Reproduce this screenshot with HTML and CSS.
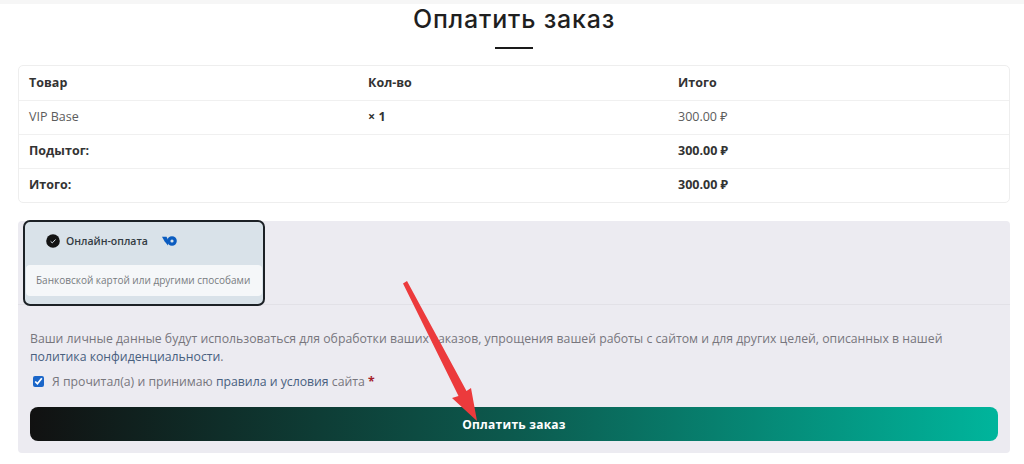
FILE: index.html
```html
<!DOCTYPE html>
<html lang="ru">
<head>
    <meta charset="UTF-8">
    <meta name="viewport" content="width=device-width, initial-scale=1.0">
    <title>Оплатить заказ</title>
    <link rel="stylesheet" href="styles.css">
</head>
<body>

    <div class="top-strip"></div>

    <main class="page">
        <h1 class="page-title">Оплатить заказ</h1>
        <div class="title-line"></div>

        <!-- Order table -->
        <div class="table-box">
            <table class="order-table">
                <thead>
                    <tr>
                        <th class="col-name">Товар</th>
                        <th class="col-qty">Кол-во</th>
                        <th>Итого</th>
                    </tr>
                </thead>
                <tbody>
                    <tr>
                        <td>VIP Base</td>
                        <td><strong>× 1</strong></td>
                        <td>300.00 ₽</td>
                    </tr>
                </tbody>
                <tfoot>
                    <tr>
                        <th colspan="2">Подытог:</th>
                        <td><strong>300.00 ₽</strong></td>
                    </tr>
                    <tr>
                        <th colspan="2">Итого:</th>
                        <td><strong>300.00 ₽</strong></td>
                    </tr>
                </tfoot>
            </table>
        </div>

        <!-- Payment block -->
        <section class="payment">
            <div class="methods">
                <div class="method">
                    <div class="method-head">
                        <span class="method-radio">
                            <svg viewBox="0 0 14 14" width="14" height="14">
                                <circle cx="7" cy="7" r="6.8" fill="#141414"/>
                                <path d="M4.6 7.3l1.7 1.6 3.2-3.4" fill="none" stroke="#d9e2e9" stroke-width="1"/>
                            </svg>
                        </span>
                        <span class="method-name">Онлайн-оплата</span>
                        <svg class="method-logo" viewBox="0 0 15 10" width="15" height="10">
                            <path d="M0 .8h4.500l1.500 3v5.700L2.500 5.200z" fill="#0b5cc0"/>
                            <circle cx="10" cy="5" r="3.200" fill="none" stroke="#0b5cc0" stroke-width="3.200"/>
                        </svg>
                    </div>
                    <div class="method-info">Банковской картой или другими способами</div>
                </div>
            </div>

            <div class="place-order">
                <p class="privacy">Ваши личные данные будут использоваться для обработки ваших заказов, упрощения вашей работы с сайтом и для других целей, описанных в нашей <a href="#">политика конфиденциальности</a>.</p>
                <label class="terms">
                    <input type="checkbox" checked>
                    <span>Я прочитал(а) и принимаю <a href="#">правила и условия</a> сайта <b class="required">*</b></span>
                </label>
                <button class="pay-button">Оплатить заказ</button>
            </div>
        </section>
    </main>

    <!-- Red arrow drawn over the screenshot -->
    <svg class="arrow" viewBox="0 0 1024 464" width="1024" height="464">
        <path d="M403 283.500L407 281 466.500 391 471 388 477 421 452 398 458.500 396z" fill="#ec3a3c"/>
    </svg>

</body>
</html>
```

FILE: styles.css
```css
/* Universal Styling */
body {
    margin: 0;
    font-family: "Open Sans", "Noto Sans", sans-serif;
    font-size: 12.5px;
    color: #5c5c5c;
    background-color: #ffffff;
    overflow: hidden;
}

.top-strip {
    height: 4px;
    background-color: #f6f6f6;
}

.page {
    padding: 0 14px 0 18px;
}

/* Title */
.page-title {
    margin: 0;
    height: 35px;
    line-height: 31px;
    font-family: Inter, "Noto Sans", sans-serif;
    font-size: 25px;
    font-weight: 500;
    letter-spacing: 0.8px;
    color: #1f1f1f;
    text-align: center;
}

.title-line {
    width: 38px;
    height: 2px;
    margin: 8px auto 16px;
    background-color: #1a1a1a;
}

/* Order table */
.table-box {
    height: 138px;
    box-sizing: border-box;
    border: 1px solid #eeeeee;
    border-radius: 5px;
}

.order-table {
    width: 100%;
    border-collapse: collapse;
    table-layout: fixed;
}

.order-table th,
.order-table td {
    height: 34px;
    box-sizing: border-box;
    padding: 0 10px 2px;
    text-align: left;
    border-top: 1px solid #f0f0f0;
}

.order-table thead th {
    border-top: none;
    padding-bottom: 0;
}

.order-table th,
.order-table strong {
    font-weight: 700;
    color: #333333;
}

.col-name {
    width: 339px;
}

.col-qty {
    width: 310px;
}

/* Payment block */
.payment {
    height: 232px;
    margin-top: 18px;
    background-color: #ecebf1;
    border-radius: 4px;
}

.methods {
    height: 83px;
    border-bottom: 1px solid #e2e1e7;
}

.method {
    width: 242px;
    height: 86px;
    box-sizing: border-box;
    margin-left: 5px;
    position: relative;
    top: -1px;
    padding: 0 1px;
    background-color: #d9e2e9;
    border: 2px solid #1c2126;
    border-radius: 7px;
}

.method-head {
    display: flex;
    align-items: center;
    height: 38px;
    padding: 0 0 5px 20px;
}

.method-radio {
    display: flex;
    margin-right: 6px;
}

.method-name {
    font-size: 10.5px;
    font-weight: 600;
    color: #333b42;
}

.method-logo {
    margin-left: 14px;
}

.method-info {
    height: 31px;
    line-height: 31px;
    padding-left: 10px;
    font-size: 10px;
    color: #777b80;
    background-color: #f5f7f9;
    border-radius: 4px;
}

.place-order {
    padding: 25px 12px 0;
}

.privacy {
    margin: 0;
    font-size: 12.25px;
    line-height: 18px;
    color: #77767d;
}

a {
    color: #48607f;
    text-decoration: none;
}

.terms {
    display: flex;
    align-items: center;
    margin-top: 6px;
    height: 18px;
    font-size: 12.25px;
    color: #77767d;
}

.terms input {
    width: 11px;
    height: 11px;
    margin: 0 8px 0 3px;
    accent-color: #1b66c9;
}

.required {
    color: #a5202a;
}

.pay-button {
    display: block;
    width: 100%;
    height: 34px;
    margin-top: 17px;
    padding: 0;
    border: none;
    border-radius: 8px;
    font-family: "Open Sans", sans-serif;
    font-size: 12px;
    font-weight: 700;
    letter-spacing: 0.25px;
    color: #ffffff;
    background: linear-gradient(90deg, #111111 0%, #0c5a4e 50%, #00b59c 100%);
}

/* Arrow annotation */
.arrow {
    position: absolute;
    top: 0;
    left: 0;
    pointer-events: none;
}
```
